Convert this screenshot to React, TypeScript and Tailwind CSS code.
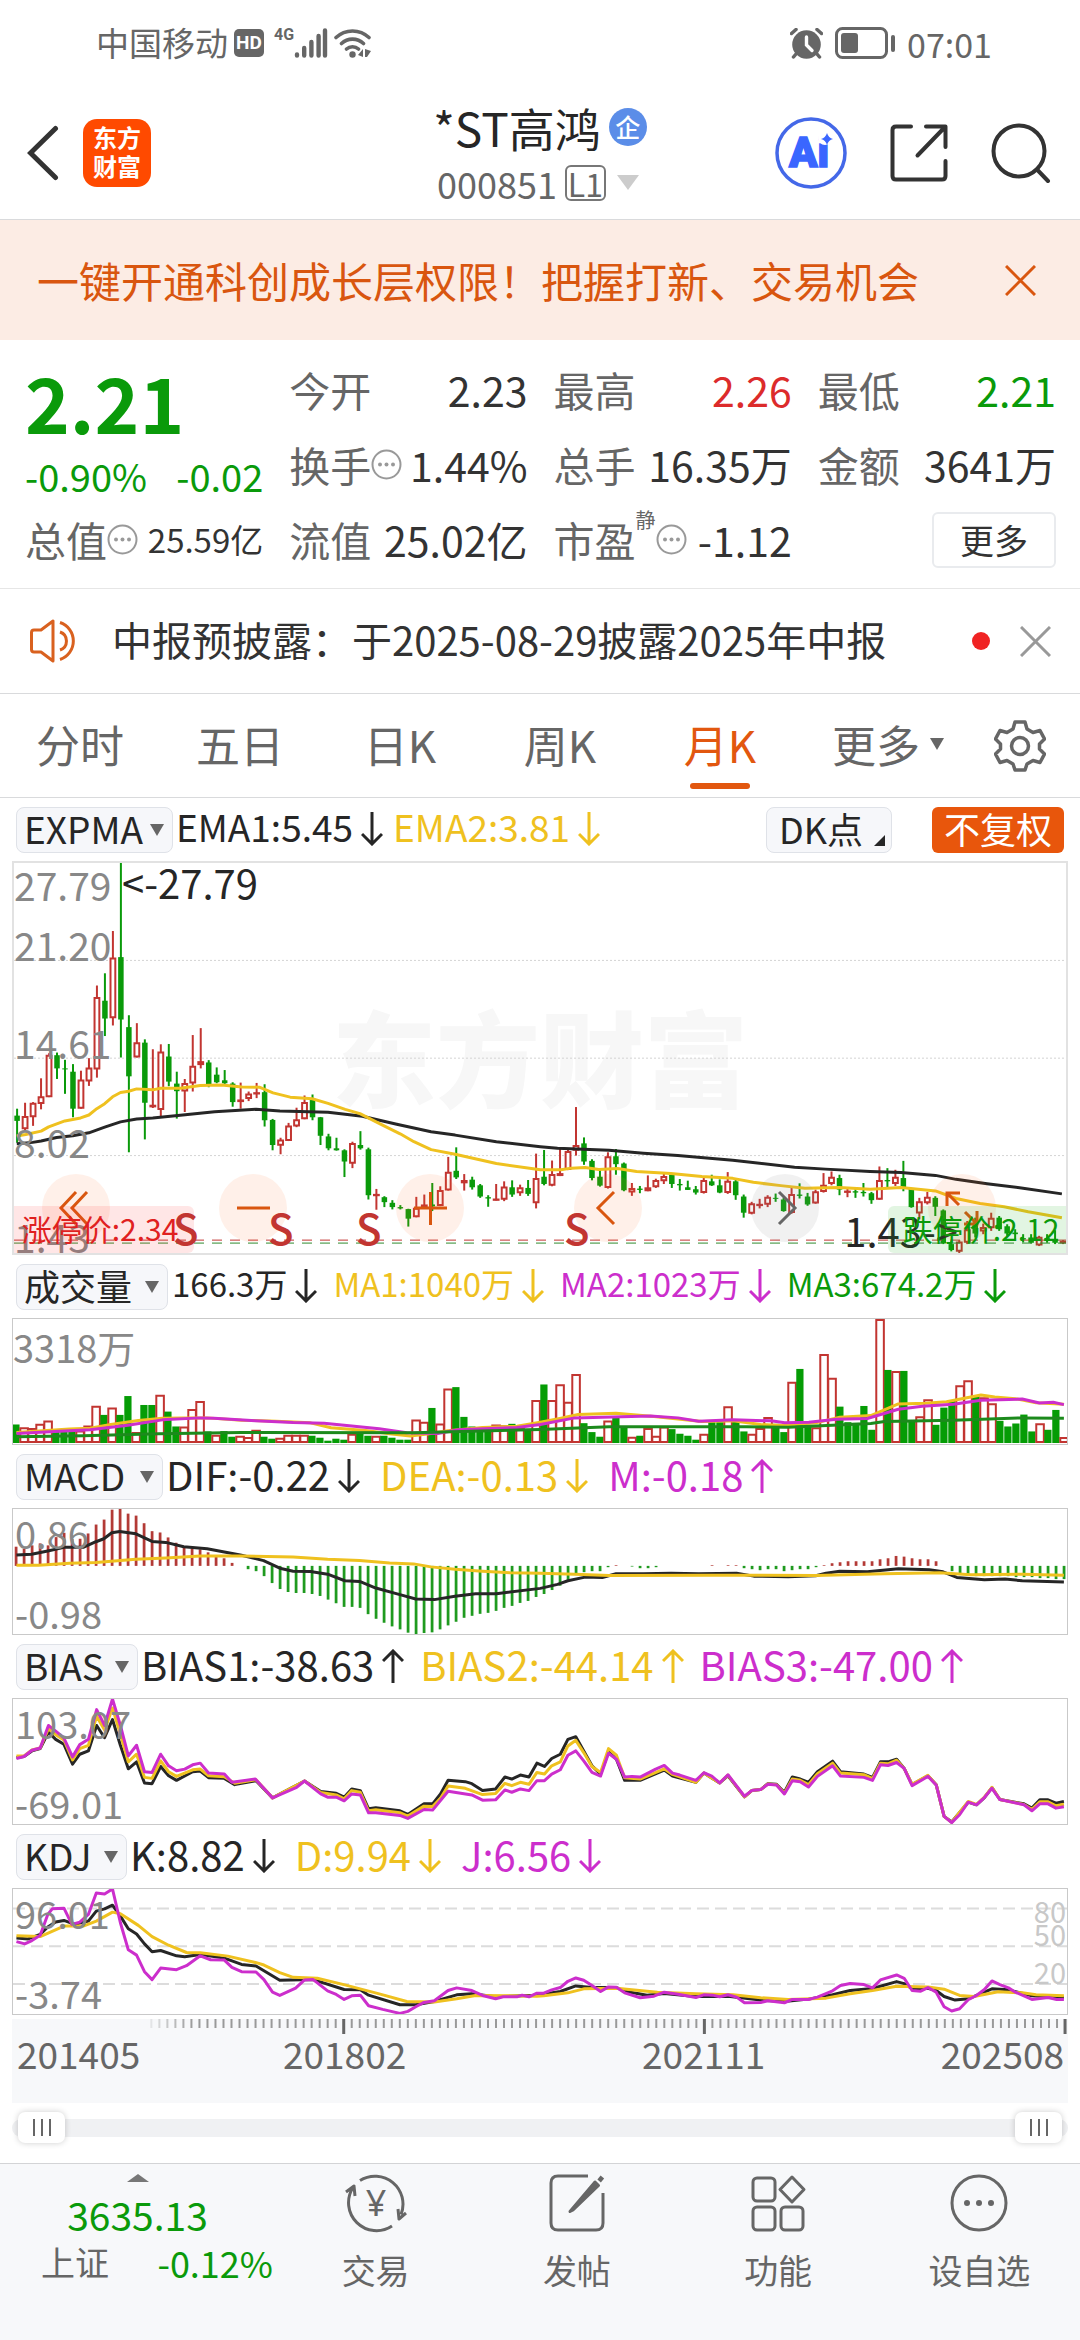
import type { ReactNode } from 'react'
import clsx from 'clsx'

const RED = '#c23531'
const GREEN = '#0a9a0a'
const BLACK = '#262626'
const YELLOW = '#efc11f'
const PINK = '#cc2ecc'

// chart space: one month is STEP wide, the second half of a trace starts at HALF
const FIRST = 45
const STEP = 23.24
const HALF = 1568
const WIDTH = 3062

const CANDLES =
  'g780,801,817,883 r762,802,842,850 r760,762,806,832 r688,742,766,782 r612,617,745,745 g610,618,658,690 g632,658,661,735 g645,668,780,806 r665,692,780,780 r627,655,698,711 r407,442,661,686 g370,453,507,560 r242,322,506,528 g36,321,510,625 g497,533,682,912 r521,579,625,625 g570,580,762,873 r600,768,776,778 r585,607,784,808 g584,622,698,712 g668,704,727,810 r690,702,728,790 r557,650,704,728 r536,636,648,658 g633,640,708,715 g655,677,700,703 g663,694,703,705 g700,704,760,774 r701,752,760,780 r728,734,751,757 r702,730,736,748 g706,730,815,834 g811,814,890,906 r868,873,892,918 r823,831,878,878 r777,812,834,836 r740,760,812,812 g737,752,806,815 g805,806,862,890 g856,864,900,906 g868,900,906,907 g903,906,940,987 r880,884,947,960 g848,890,900,904 g898,903,1042,1055 r1023,1038,1043,1086 g1045,1048,1063,1078 g1057,1065,1078,1085 g1072,1078,1082,1085 g1083,1084,1113,1137 r1047,1080,1109,1109 r1040,1070,1078,1082 g1005,1070,1076,1090 r1015,1026,1075,1075 r926,971,1028,1028 g897,968,988,993 r978,996,1006,1028 g986,995,1018,1025 g1008,1012,1046,1050 g1042,1048,1052,1077 r1008,1052,1057,1058 r1000,1016,1056,1060 g997,1018,1040,1047 r1010,1018,1036,1044 g996,1020,1038,1044 r916,990,1066,1082 g905,986,1008,1012 r937,978,1013,1015 r902,975,984,984 r900,908,966,966 r775,890,907,922 g867,885,940,950 g933,938,990,997 g960,986,1013,1016 r912,924,1020,1022 g902,924,948,980 g943,946,1027,1030 r1005,1020,1034,1044 g1014,1022,1026,1036 r982,1018,1030,1030 r992,996,1018,1020 r976,984,1000,1008 g978,980,1008,1020 g993,1008,1012,1028 g998,1018,1026,1026 g1014,1024,1034,1040 r990,996,1035,1037 g980,1000,1012,1014 g994,1012,1034,1036 r972,998,1035,1038 g996,1000,1042,1056 g1040,1046,1095,1110 r1062,1066,1098,1100 r1053,1068,1072,1082 r1042,1047,1071,1078 g1037,1050,1053,1062 g1050,1055,1090,1092 r1020,1038,1096,1098 g1006,1040,1044,1052 g1035,1046,1070,1074 r1025,1030,1067,1068 r975,1010,1032,1034 r970,986,1008,1012 g980,990,1025,1042 r1020,1028,1032,1048 g1020,1030,1034,1050 g1005,1032,1036,1046 g1032,1036,1057,1068 r955,996,1056,1056 g960,996,1000,1020 r965,986,1008,1014 g938,990,1018,1030 g1020,1022,1078,1080 r1050,1060,1097,1115 r1032,1047,1066,1070 g1045,1050,1077,1105 g1085,1088,1188,1190 g1180,1190,1208,1212 r1178,1182,1213,1217 r1120,1145,1186,1190 g1110,1125,1158,1170 r1128,1138,1152,1160 r1095,1110,1142,1150 g1105,1110,1145,1150 g1130,1136,1158,1165 g1145,1155,1160,1175 g1160,1172,1176,1185 g1160,1170,1186,1188 r1165,1168,1194,1196 g1160,1172,1180,1186 g1148,1175,1186,1190 r1178,1180,1188,1190'

const VOLUME =
  'g497 r505 r508 r495 r485 g512 g515 g508 r515 r500 r440 g468 r446 g468 g411 r520 g438 g438 r407 g458 g503 r503 r450 r426 g518 r528 g517 g534 r531 r535 r513 g534 g540 r537 r528 r528 r528 g531 g537 g546 g540 g543 r525 g520 g531 r531 g531 g537 g543 g543 r482 r489 g447 r494 r388 g384 g474 g503 g508 g508 r497 r499 g495 r508 g510 r423 g376 r423 r375 r428 r344 g493 g520 g534 r485 g472 g503 r534 g531 r508 r531 r503 g511 g525 g531 g543 r525 g490 g490 r442 g486 g518 r525 r508 r474 g495 g520 r368 g329 g500 r505 r284 r356 g443 g490 g492 g441 g513 r178 g332 r335 g335 g488 r472 r421 g498 g446 g425 r378 r363 g410 r415 r433 g486 g503 g494 g467 g518 r493 g513 g453 r535'

const MACD_BARS = [
  862, 868, 858, 852, 858, 833, 820, 838, 838, 822, 795, 780, 750, 747, 762, 768, 791, 815, 819, 834, 850, 862,
  867, 870, 879, 889, 897, 911, 920, 930, 936, 951, 972, 990, 999, 1002, 1002, 1005, 1011, 1022, 1033, 1044,
  1044, 1047, 1066, 1080, 1092, 1103, 1112, 1122, 1126, 1123, 1121, 1112, 1100, 1089, 1077, 1071, 1065, 1062,
  1056, 1047, 1041, 1032, 1026, 1014, 1005, 993, 980, 962, 948, 939, 936, 936, 924, 918, 920, 922, 927, 927,
  924, 920, 920, 920, 920, 920, 920, 918, 920, 918, 918, 927, 930, 933, 930, 930, 936, 933, 930, 930, 924, 918,
  912, 909, 906, 906, 906, 906, 900, 897, 890, 892, 897, 900, 900, 906, 920, 936, 943, 948, 951, 951, 951, 951,
  951, 954, 954, 954, 957, 957, 960, 960,
]

type Trace = { color: string; left: string; right: string }

const EMA: Trace[] = [
  {
    color: BLACK,
    left: '44,886 90,882 115,878 160,867 207,862 254,853 300,836 346,820 393,811 440,808 520,800 620,789 740,782 810,787 950,791 1050,803 1150,827 1250,850 1320,860 1440,880 1568,895',
    right: '50,900 200,906 300,915 400,922 560,936 740,957 830,963 960,970 1050,973 1150,982 1210,994 1300,1007 1400,1020 1518,1038',
  },
  {
    color: YELLOW,
    left: '44,863 70,858 115,848 137,835 184,817 230,808 254,799 277,780 300,765 323,744 346,731 370,727 393,720 440,723 463,718 520,718 578,710 640,708 700,714 750,715 790,732 840,745 904,750 950,764 1000,782 1043,795 1100,825 1160,856 1200,880 1250,904 1320,918 1440,946 1568,965',
    right: '60,965 90,960 130,958 170,964 225,961 280,970 380,976 470,985 560,991 620,1003 700,1013 770,1021 870,1019 960,1024 1050,1019 1150,1029 1210,1052 1280,1067 1350,1077 1420,1092 1518,1110',
  },
]

const VOLUME_MA: Trace[] = [
  {
    color: YELLOW,
    left: '46,521 200,511 260,508 320,497 400,485 470,478 530,477 600,477 700,484 800,487 900,492 960,507 1060,515 1130,525 1190,532 1240,526 1300,516 1400,506 1500,502 1568,490',
    right: '60,478 110,467 220,463 330,473 420,483 470,488 560,486 640,497 700,500 800,492 870,475 960,470 1040,435 1120,433 1180,428 1280,408 1320,414 1380,419 1440,431 1521,436',
  },
  {
    color: PINK,
    left: '46,524 200,516 260,513 370,499 470,483 580,477 620,478 740,486 850,491 940,493 1100,510 1180,522 1270,524 1330,513 1500,506 1568,497',
    right: '100,477 180,475 320,471 400,477 460,487 560,483 670,486 710,492 780,490 860,481 950,479 1040,451 1110,442 1200,436 1280,424 1400,420 1450,432 1490,430 1521,437',
  },
  {
    color: '#1c8a1c',
    left: '46,534 240,531 460,525 700,521 1200,522 1568,512',
    right: '200,504 600,504 720,505 960,494 1000,488 1200,484 1400,477 1521,478',
  },
]

const MACD: Trace[] = [
  {
    color: BLACK,
    left: '46,887 90,885 137,875 184,864 240,864 277,847 300,838 323,820 346,816 393,823 440,846 480,849 532,862 600,868 700,888 764,904 811,927 850,936 900,937 950,945 1000,965 1043,967 1090,987 1160,1007 1206,1020 1260,1022 1320,1012 1380,1004 1440,1004 1568,988',
    right: '50,976 80,965 130,954 180,955 220,944 300,944 380,942 460,944 570,942 620,951 720,953 800,950 830,942 870,936 950,938 1040,929 1130,932 1170,938 1210,955 1290,962 1350,960 1400,965 1521,969',
  },
  {
    color: YELLOW,
    left: '46,918 110,918 200,912 277,910 393,900 480,896 580,890 700,890 850,893 950,900 1043,904 1130,911 1200,914 1250,923 1320,930 1400,936 1480,941 1568,942',
    right: '100,945 200,949 500,948 800,949 1000,944 1160,941 1250,947 1400,945 1521,948',
  },
]

const BIAS: Trace[] = [
  {
    color: BLACK,
    left: '46,355 68,352 91,335 115,328 139,278 160,300 184,315 209,375 230,345 255,335 279,258 302,295 325,240 348,318 371,389 395,368 418,432 440,434 465,382 488,410 511,424 558,398 580,396 604,416 650,418 680,437 742,425 790,477 883,426 930,458 975,463 998,475 1020,450 1045,455 1069,510 1090,507 1160,516 1183,527 1230,495 1255,495 1278,465 1300,424 1350,428 1369,434 1400,455 1438,450 1465,414 1485,420 1510,408 1535,414 1558,372',
    right: '12,382 33,358 58,345 80,300 103,292 150,380 175,405 198,338 221,360 245,424 290,424 360,393 384,411 452,430 475,402 521,432 545,410 593,474 614,455 640,452 661,434 686,436 709,460 732,414 755,420 779,430 805,398 849,366 872,398 940,405 965,415 988,368 1010,368 1035,360 1057,388 1080,437 1126,410 1150,437 1173,533 1195,550 1243,490 1267,498 1290,476 1312,446 1335,482 1405,495 1428,508 1451,483 1475,483 1498,493 1521,488',
  },
  {
    color: YELLOW,
    left: '46,350 68,350 91,332 115,326 139,268 160,286 184,302 209,362 230,328 255,318 279,230 302,272 325,205 348,285 371,368 395,345 418,415 440,418 465,365 488,398 511,412 558,392 580,390 604,410 650,413 680,433 742,422 790,477 883,426 930,461 975,468 998,480 1020,455 1045,460 1069,516 1090,513 1160,522 1183,532 1230,502 1255,503 1278,478 1300,441 1350,448 1400,467 1438,464 1465,433 1485,440 1510,430 1535,436 1558,400',
    right: '12,405 33,380 58,368 80,320 103,303 126,340 150,382 175,400 198,328 221,348 245,416 290,420 360,389 384,406 452,430 475,402 521,432 545,408 593,474 614,455 640,452 661,435 686,437 709,463 732,420 755,424 779,437 805,404 849,372 872,402 940,407 965,419 988,372 1010,374 1035,363 1057,388 1080,436 1126,409 1150,437 1173,533 1195,551 1243,488 1267,497 1290,475 1312,445 1335,482 1405,497 1428,512 1451,489 1475,489 1498,501 1521,496',
  },
  {
    color: PINK,
    left: '46,358 68,352 91,333 115,326 139,258 160,275 184,296 209,353 230,316 255,300 279,210 302,258 325,178 348,258 371,350 395,318 418,398 440,400 465,345 488,380 511,395 535,390 558,377 580,372 604,402 650,405 672,430 740,420 790,477 860,445 883,426 930,465 950,475 975,475 998,486 1020,465 1045,468 1069,522 1090,522 1160,530 1183,539 1230,512 1255,514 1300,457 1369,468 1400,484 1438,483 1465,453 1485,460 1510,450 1535,455 1558,425',
    right: '12,425 33,405 58,392 80,348 103,335 126,365 150,400 175,411 198,342 221,360 245,414 266,412 290,414 335,390 360,379 384,402 405,408 452,424 475,401 498,411 521,432 545,407 593,472 614,455 640,452 661,436 686,438 709,465 732,425 755,428 779,444 805,412 849,380 872,411 940,415 965,424 988,377 1010,379 1035,370 1057,388 1080,440 1126,412 1150,438 1173,533 1195,552 1218,528 1243,490 1267,498 1290,476 1312,448 1335,482 1405,498 1428,516 1451,495 1475,495 1498,508 1521,504',
  },
]

const KDJ: Trace[] = [
  {
    color: BLACK,
    left: '46,896 80,899 115,885 137,863 160,848 184,843 215,855 255,845 278,815 302,808 325,797 348,830 371,868 395,884 418,914 440,938 465,934 511,950 535,953 580,946 650,957 700,976 742,981 811,1024 908,1022 998,1052 1045,1053 1069,1069 1160,1098 1206,1098 1260,1088 1325,1068 1369,1065 1438,1074 1558,1069',
    right: '58,1058 103,1041 150,1046 221,1046 245,1057 310,1069 360,1064 452,1073 545,1072 640,1084 709,1088 779,1081 849,1068 900,1055 965,1049 1035,1028 1057,1034 1080,1050 1126,1048 1150,1055 1173,1073 1205,1084 1243,1080 1312,1050 1360,1053 1428,1071 1521,1077',
  },
  {
    color: YELLOW,
    left: '46,889 115,892 184,860 240,860 278,845 325,818 348,823 400,858 440,892 488,918 540,940 580,941 660,951 740,970 765,978 811,1001 850,1015 920,1018 1000,1038 1100,1065 1180,1088 1260,1090 1325,1080 1380,1070 1558,1072',
    right: '10,1071 80,1062 126,1050 221,1048 340,1060 452,1065 560,1068 640,1077 720,1082 830,1078 900,1065 965,1055 1035,1042 1126,1044 1173,1051 1218,1070 1260,1073 1330,1059 1400,1062 1440,1068 1521,1071',
  },
  {
    color: PINK,
    left: '46,907 70,914 91,904 115,888 137,825 150,808 184,806 207,855 230,848 255,825 278,760 302,763 325,748 348,850 371,932 395,948 418,998 440,1022 465,987 511,992 540,980 580,950 610,962 650,963 672,985 700,998 742,999 765,1022 790,1060 811,1070 857,1048 883,1023 908,1022 950,1056 975,1067 998,1082 1020,1071 1045,1069 1069,1101 1110,1112 1160,1124 1183,1118 1206,1104 1230,1091 1260,1086 1300,1055 1325,1047 1369,1055 1400,1070 1438,1080 1460,1074 1500,1074 1515,1069 1535,1074 1558,1063',
    right: '10,1063 33,1053 58,1046 80,1027 103,1017 126,1024 150,1040 175,1058 198,1044 221,1045 245,1062 290,1077 330,1072 360,1060 400,1066 452,1076 475,1068 500,1069 521,1074 545,1068 570,1075 593,1092 640,1091 661,1086 709,1092 732,1082 779,1082 805,1075 849,1056 872,1040 900,1034 940,1037 965,1047 988,1023 1035,1008 1057,1018 1080,1055 1105,1057 1126,1046 1150,1060 1173,1104 1195,1117 1218,1110 1243,1083 1267,1070 1290,1052 1312,1026 1335,1037 1360,1047 1380,1060 1428,1082 1475,1076 1500,1082 1521,1082',
  },
]

function points({ left, right }: Trace) {
  const shifted = right.split(' ').map((p) => {
    const [x, y] = p.split(',').map(Number)
    return `${x + HALF},${y}`
  })
  return `${left} ${shifted.join(' ')}`
}

function Traces({ data }: { data: Trace[] }) {
  return (
    <>
      {data.map((t) => (
        <polyline
          key={t.color}
          points={points(t)}
          fill="none"
          stroke={t.color}
          strokeWidth={3}
          strokeLinejoin="round"
          vectorEffect="non-scaling-stroke"
        />
      ))}
    </>
  )
}

function Plot({ top, height, label, children }: { top: number; height: number; label: string; children: ReactNode }) {
  return (
    <svg
      className="block w-full h-full"
      viewBox={`36 ${top} ${WIDTH} ${height}`}
      preserveAspectRatio="none"
      role="img"
      aria-label={label}
    >
      {children}
    </svg>
  )
}

function Candles() {
  return (
    <>
      {CANDLES.split(' ').map((c, i) => {
        const up = c[0] === 'r'
        const [high, open, close, low] = c.slice(1).split(',').map(Number)
        const x = FIRST + i * STEP
        return (
          <g key={i} stroke={up ? RED : GREEN} fill={up ? 'white' : GREEN}>
            <line x1={x} x2={x} y1={high} y2={low} strokeWidth={2} vectorEffect="non-scaling-stroke" />
            {up ? (
              <rect x={x - 7} width={14} y={open + 3} height={Math.max(close - open - 6, 1)} strokeWidth={2} vectorEffect="non-scaling-stroke" />
            ) : (
              <rect x={x - 8} width={16} y={open} height={close - open} stroke="none" />
            )}
          </g>
        )
      })}
    </>
  )
}

function VolumeBars() {
  return (
    <>
      {VOLUME.split(' ').map((v, i) => {
        const up = v[0] === 'r'
        const y = Number(v.slice(1))
        const x = FIRST + i * STEP
        return up ? (
          <rect key={i} x={x - 11} width={22} y={y + 3} height={547 - y} fill="white" stroke={RED} strokeWidth={2} vectorEffect="non-scaling-stroke" />
        ) : (
          <rect key={i} x={x - 11} width={21} y={y} height={553 - y} fill="#059c05" />
        )
      })}
    </>
  )
}

function Caret({ className }: { className?: string }) {
  return (
    <svg className={clsx('pointer-events-none shrink-0', className)} width="14" height="12" viewBox="0 0 14 12" aria-hidden="true">
      <path d="M0 0h14L7 12z" fill="currentColor" />
    </svg>
  )
}

function Arrow({ up }: { up?: boolean }) {
  return (
    <svg className="ml-2 mt-1 w-[22px] h-[34px] shrink-0" viewBox="0 0 22 34" fill="none" stroke="currentColor" strokeWidth="3" aria-hidden="true">
      <path d={up ? 'M11 34V2M1 12 11 2l10 10' : 'M11 0v32M1 22l10 10 10-10'} />
    </svg>
  )
}

function Cross({ className }: { className?: string }) {
  return (
    <svg className={className} width="31" height="31" viewBox="0 0 31 31" fill="none" stroke="currentColor" strokeWidth="3" aria-hidden="true">
      <path d="M1 1l29 29M30 1 1 30" />
    </svg>
  )
}

function IndicatorSelect({ name, className }: { name: string; className: string }) {
  return (
    <div className={clsx('relative flex items-center h-[46px] shrink-0 rounded-lg border border-[#dfe2e8] bg-[#f6f7fa] text-[#262626]', className)}>
      <select aria-label={`${name} 指标`} className="w-full h-full appearance-none bg-transparent pl-[7px] pb-1 leading-[40px] outline-none">
        <option>{name}</option>
      </select>
      <Caret className="absolute right-2 text-[#666]" />
    </div>
  )
}

type Reading = { text: string; up?: boolean; className: string }

function IndicatorRow({ readings, className, children }: { readings: Reading[]; className: string; children: ReactNode }) {
  return (
    <div className={clsx('flex items-center h-[63px] pl-4 pr-4 whitespace-nowrap', className)}>
      {children}
      {readings.map((r) => (
        <span key={r.text} className={clsx('flex items-center pb-[5px]', r.className)}>
          {r.text}
          <Arrow up={r.up} />
        </span>
      ))}
    </div>
  )
}

function StatusBar() {
  return (
    <div className="flex items-center justify-between h-[88px] pl-24 pr-[88px] pb-[2px] text-[33px] text-[#666]">
      <div className="flex items-center">
        <span>中国移动</span>
        <span className="ml-[6px] flex items-center justify-center w-[30px] h-[28px] rounded-[5px] bg-[#666] text-white text-[19px] font-bold font-['Roboto',sans-serif]">HD</span>
        <span className="ml-[10px] mb-4 text-[16px] leading-none font-bold font-['Roboto',sans-serif]">4G</span>
        <svg width="34" height="30" viewBox="0 0 34 30" fill="none" stroke="currentColor" strokeWidth="4.4" strokeLinecap="round" aria-hidden="true">
          <path d="M3 26.500v1M10.200 20v7.500M17.400 14v13.500M24.600 8v19.500M31 2.500v25" />
        </svg>
        <svg className="ml-[6px]" width="38" height="30" viewBox="0 0 38 30" fill="none" stroke="currentColor" aria-hidden="true">
          <path d="M2 9.500a24 24 0 0 1 33 0M7.500 15.500a16 16 0 0 1 22 0M12.500 21a9 9 0 0 1 12 0" strokeWidth="3.600" strokeLinecap="round" />
          <circle cx="18.500" cy="26.500" r="3.200" fill="currentColor" stroke="none" />
          <path d="M24 27l5-6v8zM31 29v-8l6 2-4 6z" fill="currentColor" stroke="none" />
        </svg>
      </div>
      <div className="flex items-center">
        <svg width="33" height="31" viewBox="0 0 33 31" aria-hidden="true">
          <circle cx="16.500" cy="16.500" r="14.300" fill="currentColor" />
          <path d="M1.500 5.500 6 1.500M31.500 5.500 27 1.500M6 26l-2.500 3M27 26l2.500 3" stroke="currentColor" strokeWidth="3.500" strokeLinecap="round" />
          <path d="M16.500 9v8l5.500 5.500" fill="none" stroke="white" strokeWidth="3.400" strokeLinecap="round" />
        </svg>
        <svg className="ml-3" width="60" height="32" viewBox="0 0 60 32" aria-hidden="true">
          <rect x="1.500" y="1.500" width="50" height="29" rx="6" fill="none" stroke="currentColor" strokeWidth="3" />
          <rect x="6" y="6" width="17" height="20" rx="3" fill="currentColor" />
          <rect x="56" y="8" width="4" height="17" rx="2" fill="currentColor" />
        </svg>
        <span className="ml-3 text-[34px]">07:01</span>
      </div>
    </div>
  )
}

function Header() {
  return (
    <header className="grid grid-cols-[1fr_auto_1fr] items-center h-[132px] border-b border-[#d9dadc]">
      <div className="flex items-center pl-[27px] pb-[2px]">
        <button aria-label="返回">
          <svg width="32" height="56" viewBox="0 0 32 56" fill="none" stroke="#333" strokeWidth="5" strokeLinecap="round" aria-hidden="true">
            <path d="M28.500 3.500 3.500 28l25 24.500" />
          </svg>
        </button>
        <div className="ml-6 flex flex-col items-center justify-center size-[68px] rounded-[14px] bg-[#ff4a00] pb-1 text-white text-[24px] leading-[29px] font-bold">
          <span>东方</span>
          <span>财富</span>
        </div>
      </div>
      <div className="flex flex-col items-center">
        <h1 className="flex items-center gap-2 text-[46px] leading-[58px] text-[#262626]">
          *ST高鸿
          <span className="flex items-center justify-center size-[38px] rounded-full bg-[#5b8de8] text-white text-[25px] leading-none font-medium">企</span>
        </h1>
        <button className="flex items-center pr-1 text-[36px] leading-[54px] text-[#666]">
          000851
          <span className="ml-2 flex items-center justify-center w-[41px] h-9 rounded-md border-2 border-[#777] text-[32px] leading-none">L1</span>
          <svg className="ml-[11px]" width="22" height="15" viewBox="0 0 22 15" aria-hidden="true">
            <path d="M0 0h22L11 15z" fill="#ccc" />
          </svg>
        </button>
      </div>
      <div className="flex items-center justify-end gap-[43px] pr-[29px] pb-[2px]">
        <button aria-label="Ai">
          <svg width="72" height="72" viewBox="0 0 72 72" aria-hidden="true">
            <circle cx="36" cy="36" r="34" fill="white" stroke="#4468e8" strokeWidth="3.500" />
            <text x="14" y="50" fontFamily="Roboto" fontWeight="900" fontSize="42" fill="#3a66ff" stroke="#3a66ff" strokeWidth="1.500">
              Ai
            </text>
            <circle cx="50" cy="21" r="7" fill="white" />
            <path d="M52 16q1.500 5 6 6-4.500 1-6 6-1.500-5-6-6 4.500-1 6-6z" fill="#3a66ff" />
          </svg>
        </button>
        <button aria-label="分享">
          <svg width="58" height="58" viewBox="0 0 58 58" fill="none" stroke="#333" strokeWidth="4" strokeLinecap="round" strokeLinejoin="round" aria-hidden="true">
            <path d="M21 2.500H6Q2.500 2.500 2.500 6v46q0 3.500 3.500 3.500h46q3.500 0 3.500-3.500V37M36 2.500h19.500V23M55 3 27.500 31.500" />
          </svg>
        </button>
        <button aria-label="搜索">
          <svg width="60" height="60" viewBox="0 0 60 60" fill="none" stroke="#333" strokeWidth="4" strokeLinecap="round" aria-hidden="true">
            <circle cx="28" cy="28" r="25.500" />
            <path d="M46 46.500 57 58" />
          </svg>
        </button>
      </div>
    </header>
  )
}

function Banner() {
  return (
    <div className="flex items-center justify-between h-[120px] pl-[37px] pr-[44px] bg-[#fcece4] text-[#d9560f]">
      <p className="pb-[2px] text-[42px] whitespace-nowrap">一键开通科创成长层权限！把握打新、交易机会</p>
      <button aria-label="关闭">
        <Cross />
      </button>
    </div>
  )
}

function Info() {
  return (
    <svg className="shrink-0" width="31" height="31" viewBox="0 0 31 31" aria-hidden="true">
      <circle cx="15.500" cy="15.500" r="14" fill="none" stroke="#999" strokeWidth="2" />
      <g fill="#999">
        <circle cx="9" cy="15.500" r="2" />
        <circle cx="15.500" cy="15.500" r="2" />
        <circle cx="22" cy="15.500" r="2" />
      </g>
    </svg>
  )
}

type QuoteProps = { label: string; value: string; info?: boolean; note?: string; className?: string }

function Quote({ label, value, info, note, className = 'text-[41px] text-[#333]' }: QuoteProps) {
  return (
    <div className="flex items-center justify-between h-[75px] whitespace-nowrap">
      <dt className="flex items-center text-[41px] text-[#666]">
        {label}
        {note && <sup className="-top-5 text-[20px] leading-none">{note}</sup>}
        {info && <Info />}
      </dt>
      <dd className={className}>{value}</dd>
    </div>
  )
}

function QuotePanel() {
  return (
    <section className="grid grid-cols-4 gap-x-[26px] pl-[25px] pr-6 pt-3 pb-[11px] border-b border-[#e6e6e6]">
      <div>
        <div className="text-[#0a9a0a]">
          <p className="h-[98px] leading-[98px] text-[76px] font-bold">2.21</p>
          <p className="flex justify-between h-[52px] leading-[52px] text-[38px] whitespace-nowrap">
            <span>-0.90%</span>
            <span>-0.02</span>
          </p>
        </div>
        <dl>
          <Quote label="总值" value="25.59亿" info className="text-[33px] text-[#333]" />
        </dl>
      </div>
      <dl>
        <Quote label="今开" value="2.23" />
        <Quote label="换手" value="1.44%" info />
        <Quote label="流值" value="25.02亿" />
      </dl>
      <dl>
        <Quote label="最高" value="2.26" className="text-[41px] text-[#dc2b2b]" />
        <Quote label="总手" value="16.35万" />
        <Quote label="市盈" value="-1.12" note="静" info />
      </dl>
      <div>
        <dl>
          <Quote label="最低" value="2.21" className="text-[41px] text-[#0a9a0a]" />
          <Quote label="金额" value="3641万" />
        </dl>
        <div className="flex items-center justify-end h-[75px]">
          <button className="w-[124px] h-[56px] rounded-md border-2 border-[#e9ebee] text-[34px] leading-none text-[#333]">更多</button>
        </div>
      </div>
    </section>
  )
}

function Notice() {
  return (
    <div className="flex items-center h-[105px] pl-[30px] pr-[29px] border-b border-[#d9dadc]">
      <svg className="shrink-0" width="52" height="44" viewBox="0 0 52 44" fill="none" stroke="#d9611f" strokeWidth="3" strokeLinejoin="round" aria-hidden="true">
        <path d="M23 2v40L11 33H4q-2.500 0-2.500-2.500v-17Q1.500 11 4 11h7z" />
        <path d="M30 3.500a19.500 19.500 0 0 1 0 37M30 13a9.500 9.500 0 0 1 0 18" />
      </svg>
      <p className="ml-[30px] pb-1 flex-1 text-[40px] text-[#333] whitespace-nowrap">中报预披露：于2025-08-29披露2025年中报</p>
      <span className="size-[18px] rounded-full bg-[#f02323]" />
      <button className="ml-[30px] text-[#999]" aria-label="关闭">
        <Cross />
      </button>
    </div>
  )
}

const TABS = ['分时', '五日', '日K', '周K', '月K']

function Tabs() {
  return (
    <nav className="grid grid-cols-[repeat(6,4fr)_3fr] h-[104px] border-b border-[#d9dadc] text-[44px] text-[#666]">
      {TABS.map((t) => (
        <button key={t} className={clsx('relative pb-1', t === '月K' && 'text-[#e2570f]')}>
          {t}
          {t === '月K' && <span className="absolute bottom-2 left-1/2 -translate-x-1/2 w-[60px] h-[6px] rounded-full bg-[#e2570f]" />}
        </button>
      ))}
      <button className="flex items-center justify-center gap-[10px] pl-4 pb-1">
        更多
        <Caret />
      </button>
      <button className="flex items-center justify-center" aria-label="设置">
        <svg width="52" height="52" viewBox="0 0 52 52" fill="none" stroke="#666" strokeWidth="3.500" strokeLinejoin="round" aria-hidden="true">
          <path d="M21 2h10l2 7 6 3.500 7-2 4.500 8.500-5 5v5l5 5L46 42.500l-7-2L33 44l-2 6H21l-2-6-6-3.500-7 2L1.500 34l5-5v-5l-5-5L6 10.500l7 2L19 9z" />
          <circle cx="26" cy="26" r="8.500" />
        </svg>
      </button>
    </nav>
  )
}

function Scale({ className, children }: { className: string; children: ReactNode }) {
  return <span className={clsx('absolute leading-9 text-[#888]', className)}>{children}</span>
}

function ControlButton({ label, gray, children }: { label: string; gray?: boolean; children: ReactNode }) {
  return (
    <button aria-label={label} className={clsx('flex items-center justify-center size-[68px] rounded-full', gray ? 'bg-[#888888]/12 text-[#666]' : 'bg-[#ff6a20]/10 text-[#d9560f]')}>
      <svg width="40" height="40" viewBox="0 0 40 40" fill="none" stroke="currentColor" strokeWidth="3" aria-hidden="true">
        {children}
      </svg>
    </button>
  )
}

function PriceChart() {
  return (
    <div className="relative mx-3 h-[394px] border-2 border-[#e2e2e2]">
      <div className="absolute inset-x-0 top-[132px] text-center text-[104px] leading-[120px] font-black text-[#f7f7f7]">东方财富</div>
      <div className="absolute inset-0">
        <Plot top={36} height={1181} label="月K线">
          <g stroke="#d4d4d4" strokeWidth={1} strokeDasharray="2 2">
            <path d="M36 331h3062M36 627h3062M36 922h3062" vectorEffect="non-scaling-stroke" />
          </g>
          <Candles />
          <Traces data={EMA} />
          <path d="M36 1178h3062" stroke={RED} strokeWidth={1} strokeDasharray="10 8" vectorEffect="non-scaling-stroke" />
          <path d="M36 1187h3062" stroke="#2f8a2f" strokeWidth={1} strokeDasharray="10 8" vectorEffect="non-scaling-stroke" />
        </Plot>
      </div>
      <Scale className="left-0 top-[3px] text-[39px]">27.79</Scale>
      <Scale className="left-0 top-[63px] text-[39px]">21.20</Scale>
      <Scale className="left-0 top-[161px] text-[39px]">14.61</Scale>
      <Scale className="left-0 top-[260px] text-[39px]">8.02</Scale>
      <Scale className="left-0 top-[355px] text-[39px]">1.43</Scale>
      <span className="absolute left-[108px] top-[1px] text-[40px] leading-9 text-[#262626]">&lt;-27.79</span>
      <span className="absolute right-[108px] top-[349px] text-[40px] leading-9 text-[#262626]">1.43-&gt;</span>
      <div className="absolute inset-x-0 top-[311px] flex justify-between pl-[28px] pr-[70px]">
        <ControlButton label="最左">
          <path d="M20 4 5 20l15 16M31 4 16 20l15 16" />
        </ControlButton>
        <ControlButton label="缩小">
          <path d="M4 20h33" />
        </ControlButton>
        <ControlButton label="放大">
          <path d="M4 20h33M20.500 4v33" />
        </ControlButton>
        <ControlButton label="左移">
          <path d="M26 4 10 20l16 16" />
        </ControlButton>
        <ControlButton label="右移" gray>
          <path d="M14 4l16 16-16 16" />
        </ControlButton>
        <ControlButton label="全屏">
          <path d="M18 5H5v13M5 5l12 12M22 36h13V23M35 36 23 24" />
        </ControlButton>
      </div>
      <span className="absolute left-0 bottom-0 w-[180px] h-[47px] pr-2 rounded-r-md bg-[#ff3030]/12 text-center text-[30px] leading-[44px] text-[#e02020]">涨停价:2.34</span>
      <span className="absolute right-0 bottom-0 w-[178px] h-[47px] pl-2 rounded-l-md bg-[#20b020]/13 text-center text-[30px] leading-[44px] text-[#0a9a0a]">跌停价:2.12</span>
      <div className="text-[42px] leading-10 font-medium text-[#c23531]">
        <span className="absolute left-[159px] top-[344px]">S</span>
        <span className="absolute left-[254px] top-[344px]">S</span>
        <span className="absolute left-[342px] top-[344px]">S</span>
        <span className="absolute left-[550px] top-[344px]">S</span>
      </div>
    </div>
  )
}

function SubChart({ children }: { children: ReactNode }) {
  return <div className="relative mx-3 h-[127px] border border-[#c9c9c9]">{children}</div>
}

function Charts() {
  return (
    <section>
      <IndicatorRow
        className="text-[37px]"
        readings={[
          { text: 'EMA1:5.45', className: 'ml-[3px] text-[#262626]' },
          { text: 'EMA2:3.81', className: 'ml-[10px] text-[#efc11f]' },
        ]}
      >
        <IndicatorSelect name="EXPMA" className="w-[157px] text-[37px]" />
        <div className="order-last flex-1 flex justify-end gap-10">
          <button className="relative w-[126px] h-[46px] rounded-lg border border-[#dfe2e8] bg-[#f6f7fa] pr-4 pb-1 text-[36px] leading-none text-[#262626]">
            DK点
            <svg className="absolute right-[6px] bottom-[6px]" width="11" height="11" viewBox="0 0 11 11" aria-hidden="true">
              <path d="M11 0v11H0z" fill="#262626" />
            </svg>
          </button>
          <button className="w-[132px] h-[46px] pb-1 rounded-md bg-[#e8560c] text-[36px] leading-none text-white">不复权</button>
        </div>
      </IndicatorRow>
      <PriceChart />

      <IndicatorRow
        className="text-[33px]"
        readings={[
          { text: '166.3万', className: 'ml-1 text-[#262626]' },
          { text: 'MA1:1040万', className: 'ml-4 text-[#efc11f]' },
          { text: 'MA2:1023万', className: 'ml-4 text-[#cc2ecc]' },
          { text: 'MA3:674.2万', className: 'ml-4 text-[#0a9a0a]' },
        ]}
      >
        <IndicatorSelect name="成交量" className="w-[152px] text-[36px]" />
      </IndicatorRow>
      <SubChart>
        <Plot top={178} height={378} label="成交量">
          <VolumeBars />
          <Traces data={VOLUME_MA} />
        </Plot>
        <Scale className="left-0 top-[10px] text-[38px]">3318万</Scale>
      </SubChart>

      <IndicatorRow
        className="text-[40px]"
        readings={[
          { text: 'DIF:-0.22', className: 'ml-[3px] text-[#262626]' },
          { text: 'DEA:-0.13', className: 'ml-5 text-[#efc11f]' },
          { text: 'M:-0.18', className: 'ml-5 text-[#cc2ecc]', up: true },
        ]}
      >
        <IndicatorSelect name="MACD" className="w-[147px] text-[37px]" />
      </IndicatorRow>
      <SubChart>
        <Plot top={748} height={378} label="MACD">
          {MACD_BARS.map((y, i) => (
            <rect key={i} x={FIRST + i * STEP - 4} width={8} y={Math.min(y, 920)} height={Math.abs(y - 920)} fill={y < 920 ? '#b33a36' : '#1f9a1f'} />
          ))}
          <Traces data={MACD} />
        </Plot>
        <Scale className="left-[2px] top-[6px] text-[38px]">0.86</Scale>
        <Scale className="left-[2px] bottom-[3px] text-[38px]">-0.98</Scale>
      </SubChart>

      <IndicatorRow
        className="text-[40px]"
        readings={[
          { text: 'BIAS1:-38.63', className: 'ml-[3px] text-[#262626]', up: true },
          { text: 'BIAS2:-44.14', className: 'ml-4 text-[#efc11f]', up: true },
          { text: 'BIAS3:-47.00', className: 'ml-4 text-[#cc2ecc]', up: true },
        ]}
      >
        <IndicatorSelect name="BIAS" className="w-[122px] text-[37px]" />
      </IndicatorRow>
      <SubChart>
        <Plot top={178} height={378} label="BIAS">
          <Traces data={BIAS} />
        </Plot>
        <Scale className="left-[2px] top-[6px] text-[38px]">103.07</Scale>
        <Scale className="left-[2px] bottom-[3px] text-[38px]">-69.01</Scale>
      </SubChart>

      <IndicatorRow
        className="text-[40px]"
        readings={[
          { text: 'K:8.82', className: 'ml-[3px] text-[#262626]' },
          { text: 'D:9.94', className: 'ml-5 text-[#efc11f]' },
          { text: 'J:6.56', className: 'ml-5 text-[#cc2ecc]' },
        ]}
      >
        <IndicatorSelect name="KDJ" className="w-[111px] text-[37px]" />
      </IndicatorRow>
      <SubChart>
        <Plot top={748} height={378} label="KDJ">
          <g stroke="#dcdcdc" strokeWidth={2} strokeDasharray="12 6">
            <path d="M36 807h3062M36 921h3062M36 1035h3062" vectorEffect="non-scaling-stroke" />
          </g>
          <Traces data={KDJ} />
        </Plot>
        <Scale className="left-[2px] top-[6px] text-[38px]">96.01</Scale>
        <Scale className="left-[2px] bottom-[3px] text-[38px]">-3.74</Scale>
        <div className="absolute right-[1px] top-[6px] text-[29px] leading-[30px] text-[#c8c8c8]">
          <div className="h-[23px]">80</div>
          <div className="h-[38px]">50</div>
          <div>20</div>
        </div>
      </SubChart>
    </section>
  )
}

function TimeAxis() {
  return (
    <div className="relative mx-3 mt-1 h-[84px] bg-[#f7f8fa]">
      <svg className="block w-full h-4" viewBox={`36 0 ${WIDTH} 16`} preserveAspectRatio="none" aria-hidden="true">
        {Array.from({ length: 115 }, (_, n) => {
          const i = n + 17
          const major = (131 - i) % 45 === 0
          const x = FIRST + i * STEP
          return (
            <line
              key={i}
              x1={x}
              x2={x}
              y1={0}
              y2={major ? 15 : 9}
              stroke={major ? '#666' : '#999'}
              strokeWidth={major ? 3 : 2}
              opacity={Math.min(1, 0.2 + n * 0.15)}
              vectorEffect="non-scaling-stroke"
            />
          )
        })}
      </svg>
      <div className="text-[37px] leading-9 text-[#666]">
        <span className="absolute left-[5px] top-4">201405</span>
        <span className="absolute left-[31.500%] top-4 -translate-x-1/2">201802</span>
        <span className="absolute left-[65.500%] top-4 -translate-x-1/2">202111</span>
        <span className="absolute right-1 top-4">202508</span>
      </div>
    </div>
  )
}

const THUMB =
  'absolute inset-x-[6px] top-0 h-[31px] appearance-none bg-transparent pointer-events-none [&::-webkit-slider-thumb]:pointer-events-auto [&::-webkit-slider-thumb]:appearance-none [&::-webkit-slider-thumb]:w-[47px] [&::-webkit-slider-thumb]:h-[31px] [&::-webkit-slider-thumb]:rounded-[7px] [&::-webkit-slider-thumb]:shadow-[0_0_6px_rgba(0,0,0,0.2)] [&::-webkit-slider-thumb]:[background:linear-gradient(#666,#666)_15px_50%/2px_17px_no-repeat,linear-gradient(#666,#666)_23px_50%/2px_17px_no-repeat,linear-gradient(#666,#666)_31px_50%/2px_17px_no-repeat,#fff]'

function RangeSlider() {
  return (
    <div className="h-[60px] px-3 pt-[9px]">
      <div className="relative flex items-center h-[31px]">
        <div className="w-full h-[18px] rounded-full bg-[#f0f1f3]" />
        <input type="range" aria-label="起始月份" defaultValue={0} className={THUMB} />
        <input type="range" aria-label="结束月份" defaultValue={100} className={THUMB} />
      </div>
    </div>
  )
}

function NavItem({ label, children }: { label: string; children: ReactNode }) {
  return (
    <button className="flex-1 flex flex-col items-center pt-[9px] text-[34px] leading-[50px] text-[#666]">
      <svg className="mb-3" width="64" height="60" viewBox="0 0 64 60" fill="none" stroke="currentColor" strokeWidth="3" strokeLinejoin="round" aria-hidden="true">
        {children}
      </svg>
      {label}
    </button>
  )
}

function BottomNav() {
  return (
    <footer className="flex items-start flex-1 min-h-[176px] border-t border-[#d3d4d6] bg-[#f7f8fa]">
      <button className="flex flex-col items-center w-[275px] pt-[10px] whitespace-nowrap">
        <svg width="22" height="8" viewBox="0 0 22 8" aria-hidden="true">
          <path d="M11 0l11 8H0z" fill="#777" />
        </svg>
        <span className="mt-[7px] text-[39px] leading-[50px] text-[#0a9a0a]">3635.13</span>
        <span className="flex items-center justify-between w-full pl-[41px] pr-[2px] leading-[46px]">
          <span className="text-[34px] text-[#666]">上证</span>
          <span className="text-[36px] text-[#0a9a0a]">-0.12%</span>
        </span>
      </button>
      <NavItem label="交易">
        <path d="M16 7.500A28 28 0 0 1 57 41.500M48 53A28 28 0 0 1 9 14.500M2 19l8-6 1 10M62 40l-7 6-1-10" />
        <text x="32" y="43" textAnchor="middle" fontSize="36" fontFamily="Noto Sans" fill="currentColor" stroke="none">
          ¥
        </text>
      </NavItem>
      <NavItem label="发帖">
        <path d="M43 3H13q-7 0-7 7v40q0 7 7 7h38q7 0 7-7V20" />
        <path d="M25 38.500 50 9l3.500 3.500L28 37z" fill="currentColor" />
        <path d="M54 4.500l3.500 3" strokeWidth="5" />
      </NavItem>
      <NavItem label="功能">
        <rect x="7" y="5" width="22" height="23" rx="4" />
        <rect x="7" y="34" width="22" height="23" rx="4" />
        <rect x="35" y="34" width="22" height="23" rx="4" />
        <path d="M46 4l12 12.500L46 29 34 16.500z" />
      </NavItem>
      <NavItem label="设自选">
        <circle cx="32" cy="30" r="27" />
        <g fill="currentColor" stroke="none">
          <circle cx="20" cy="30" r="3" />
          <circle cx="32" cy="30" r="3" />
          <circle cx="44" cy="30" r="3" />
        </g>
      </NavItem>
    </footer>
  )
}

export default function App() {
  return (
    <div className="flex flex-col min-h-screen bg-white font-['Noto_Sans_CJK_SC',sans-serif]">
      <StatusBar />
      <Header />
      <Banner />
      <QuotePanel />
      <Notice />
      <Tabs />
      <Charts />
      <TimeAxis />
      <RangeSlider />
      <BottomNav />
    </div>
  )
}
